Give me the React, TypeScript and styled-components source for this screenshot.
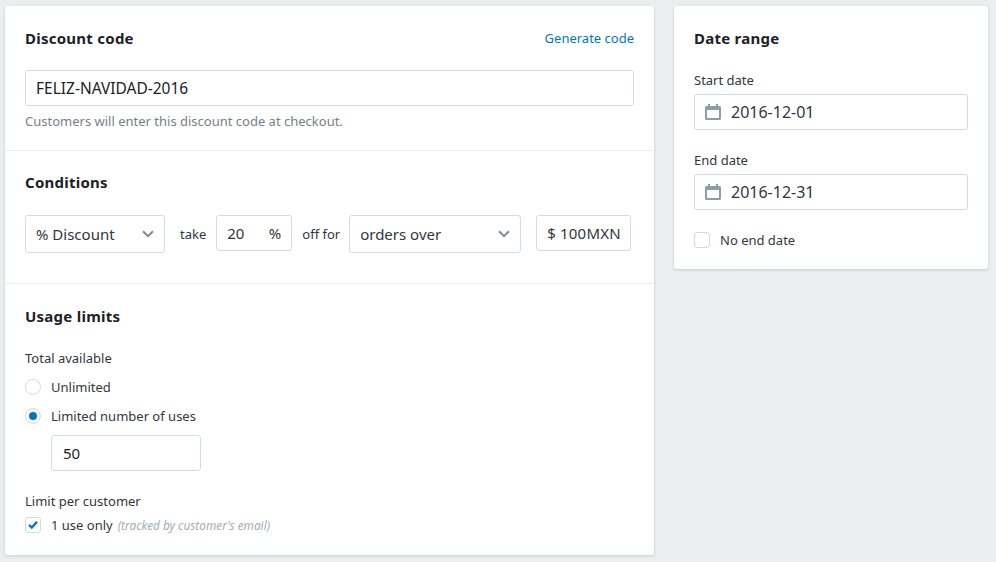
import React from "react";
import styled, {createGlobalStyle} from "styled-components";

const GlobalStyle = createGlobalStyle`
  html, body {
    margin: 0;
    padding: 0;
    background: #ebeef0;
    font-family: "Noto Sans", "Open Sans", sans-serif;
    color: #31373d;
  }
  * {
    box-sizing: border-box;
  }
`

const Page = styled.div`
  display: grid;
  grid-template-columns: 649px 314px;
  column-gap: 20px;
  align-items: start;
  width: 996px;
  height: 562px;
  overflow: hidden;
  padding: 6px 0 0 5px;
`

const Card = styled.div`
  background: white;
  border-radius: 3px;
  box-shadow: 0 1px 3px 0 rgba(63, 63, 68, 0.2);
`

const Section = styled.div<{$top: number; $bottom: number; $last?: boolean}>`
  padding: ${p => p.$top}px 20px ${p => p.$bottom}px;
  border-bottom: ${p => (p.$last ? "none" : "1px solid #ebeef0")};
`

const HeaderRow = styled.div`
  display: flex;
  justify-content: space-between;
  align-items: center;
  height: 24px;
`

const Title = styled.div`
  font-size: 15px;
  font-weight: 700;
  line-height: 24px;
  letter-spacing: 0.25px;
  color: #1d2126;
`

const LinkText = styled.a`
  font-size: 13px;
  color: #0078bd;
  text-decoration: none;
`

const Box = styled.div<{$width?: number; $height?: number; $mt?: number; $size?: number; $dark?: boolean; $pad?: number}>`
  display: flex;
  align-items: center;
  flex: none;
  width: ${p => (p.$width ? `${p.$width}px` : "100%")};
  height: ${p => p.$height ?? 36}px;
  margin-top: ${p => p.$mt ?? 0}px;
  padding: 0 10px 0 ${p => p.$pad ?? 10}px;
  background: white;
  border: 1px solid #d3dbe2;
  border-radius: 3px;
  font-size: ${p => p.$size ?? 15}px;
  white-space: nowrap;
  color: ${p => (p.$dark ? "#1d2126" : "#31373d")};
`

const SpacedBox = styled(Box)`
  justify-content: space-between;
`

const AmountBox = styled(Box)`
  margin-left: 15px;
  letter-spacing: 0.2px;
`

const Hint = styled.div`
  margin-top: 6px;
  font-size: 13px;
  line-height: 18px;
  color: #76808a;
`

const ConditionRow = styled.div`
  display: flex;
  align-items: flex-start;
  margin-top: 21px;
`

const RowWord = styled.span<{$left: number; $right: number}>`
  flex: none;
  margin: 0 ${p => p.$right}px 0 ${p => p.$left}px;
  font-size: 13px;
  line-height: 38px;
  color: #31373d;
`

const Label = styled.div<{$mt?: number}>`
  margin-top: ${p => p.$mt ?? 0}px;
  font-size: 13px;
  line-height: 18px;
  color: #31373d;
`

const OptionRow = styled.div<{$mt?: number}>`
  display: flex;
  align-items: center;
  gap: 10px;
  height: 18px;
  margin-top: ${p => p.$mt ?? 0}px;
  font-size: 13px;
  color: #31373d;
`

const Radio = styled.span<{$on?: boolean}>`
  display: flex;
  align-items: center;
  justify-content: center;
  flex: none;
  width: 16px;
  height: 16px;
  border: 1px solid #d3dbe2;
  border-radius: 50%;
  &::after {
    content: "";
    display: ${p => (p.$on ? "block" : "none")};
    width: 8px;
    height: 8px;
    border-radius: 50%;
    background: #0078bd;
  }
`

const Check = styled.span`
  display: flex;
  align-items: center;
  justify-content: center;
  flex: none;
  width: 16px;
  height: 16px;
  border: 1px solid #d3dbe2;
  border-radius: 3px;
`

const Indent = styled.div`
  margin-left: 26px;
`

const Note = styled.em`
  margin-left: 5px;
  font-size: 11.8px;
  color: #a3adb8;
`

const Chevron = () => (
    <svg width="12" height="8" viewBox="0 0 12 8" fill="none">
        <path d="M1 1.200 6 6.200 11 1.200" stroke="#798c9c" strokeWidth="2"/>
    </svg>
);

const CalendarIcon = () => (
    <svg width="16" height="16" viewBox="0 0 16 16" fill="#8a9cae">
        <path d="M3 0h2v2h6V0h2v2h1.500A1.500 1.500 0 0 1 16 3.500v11a1.500 1.500 0 0 1-1.500 1.500h-13A1.500 1.500 0 0 1 0 14.500v-11A1.500 1.500 0 0 1 1.500 2H3V0Zm-1 6v8h12V6H2Z"/>
    </svg>
);

const CheckIcon = () => (
    <svg width="10" height="9" viewBox="0 0 10 9" fill="none">
        <path d="M1 3.800 3.800 6.500 9 .8" stroke="#0078bd" strokeWidth="2.300"/>
    </svg>
);

const DateBox = styled(Box)`
  gap: 10px;
`

const DateField = ({value}: {value: string}) => (
    <DateBox $mt={5} $size={16}>
        <CalendarIcon/>
        {value}
    </DateBox>
);

const App = () => {
    return (
        <Page>
            <GlobalStyle/>
            <Card>
                <Section $top={20} $bottom={20}>
                    <HeaderRow>
                        <Title>Discount code</Title>
                        <LinkText href="#">Generate code</LinkText>
                    </HeaderRow>
                    <Box $mt={20} $size={15.5} $dark>FELIZ-NAVIDAD-2016</Box>
                    <Hint>Customers will enter this discount code at checkout.</Hint>
                </Section>
                <Section $top={19} $bottom={30}>
                    <Title>Conditions</Title>
                    <ConditionRow>
                        <SpacedBox $width={140} $height={38}>% Discount <Chevron/></SpacedBox>
                        <RowWord $left={15} $right={10}>take</RowWord>
                        <SpacedBox $width={76}>20 <span>%</span></SpacedBox>
                        <RowWord $left={10} $right={9}>off for</RowWord>
                        <SpacedBox $width={172} $height={38}>orders over <Chevron/></SpacedBox>
                        <AmountBox $width={95}>$ 100MXN</AmountBox>
                    </ConditionRow>
                </Section>
                <Section $top={20} $bottom={21} $last>
                    <Title>Usage limits</Title>
                    <Label $mt={21}>Total available</Label>
                    <OptionRow $mt={11}><Radio/>Unlimited</OptionRow>
                    <OptionRow $mt={11}><Radio $on/>Limited number of uses</OptionRow>
                    <Indent>
                        <Box $width={150} $mt={10} $pad={11} $dark>50</Box>
                    </Indent>
                    <Label $mt={21}>Limit per customer</Label>
                    <OptionRow $mt={6}>
                        <Check><CheckIcon/></Check>
                        <span>1 use only<Note>(tracked by customer's email)</Note></span>
                    </OptionRow>
                </Section>
            </Card>
            <Card>
                <Section $top={20} $bottom={20} $last>
                    <Title>Date range</Title>
                    <Label $mt={21}>Start date</Label>
                    <DateField value="2016-12-01"/>
                    <Label $mt={21}>End date</Label>
                    <DateField value="2016-12-31"/>
                    <OptionRow $mt={21}><Check/>No end date</OptionRow>
                </Section>
            </Card>
        </Page>
    );
}

export default App;
